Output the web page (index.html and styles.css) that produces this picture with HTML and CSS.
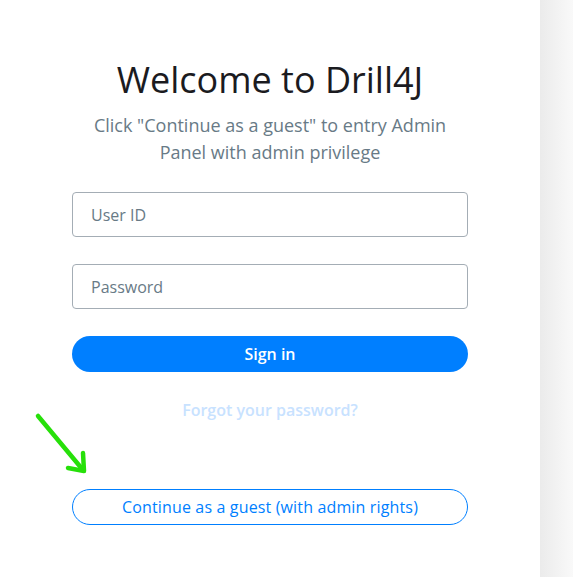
FILE: index.html
```html
<!DOCTYPE html>
<html>
<head>
<meta charset="utf-8">
<link rel="stylesheet" href="styles.css">
</head>
<body>
<div class="page">
  <main class="main">
    <div class="form">
      <h1 class="title">Welcome to Drill4J</h1>
      <p class="subtitle">Click "Continue as a guest" to entry Admin Panel with admin privilege</p>
      <input class="field" type="text" placeholder="User ID">
      <input class="field" type="password" placeholder="Password">
      <button class="btn-primary">Sign in</button>
      <a class="forgot">Forgot your password?</a>
      <button class="btn-guest">Continue as a guest (with admin rights)</button>
    </div>
    <svg class="arrow" width="65" height="75" viewBox="0 0 65 75">
      <path d="M8 11 L53 65" stroke="#27e00a" stroke-width="4.5" stroke-linecap="round" fill="none"/>
      <path d="M53 48 L54 66 L38 63" stroke="#27e00a" stroke-width="4.5" stroke-linecap="round" stroke-linejoin="round" fill="none"/>
    </svg>
  </main>
  <aside class="side"></aside>
</div>
</body>
</html>
```
FILE: styles.css
```css
* { box-sizing: border-box; }
html, body { margin: 0; padding: 0; background: #fff; }
body { font-family: "Open Sans", sans-serif; }
.page { display: flex; height: 577px; }
.main { width: 540px; position: relative; display: flex; justify-content: center; }
.side { flex: 1; background: linear-gradient(to right, #ebebeb, #f9f9f9); }
.form { width: 396px; display: flex; flex-direction: column; align-items: center; padding-top: 56px; }
.title { margin: 0; font-size: 36px; font-weight: 400; line-height: 48px; color: #1b1b1f; }
.subtitle { margin: 8px 0 0; font-size: 18px; line-height: 27px; color: #687a86; text-align: center; width: 396px; }
.field { width: 396px; height: 45px; border: 1px solid #a4adb5; border-radius: 4px; padding: 0 18px; font-family: inherit; font-size: 16px; color: #1b1b1f; outline: none; }
.field::placeholder { color: #687a86; }
.field:first-of-type { margin-top: 26px; }
.field + .field { margin-top: 27px; }
.btn-primary { margin-top: 27px; width: 396px; height: 36px; border: none; border-radius: 18px; background: #007fff; color: #fff; font-family: inherit; font-size: 16px; font-weight: 600; }
.forgot { margin-top: 27px; font-size: 16px; font-weight: 600; color: #c8e2ff; line-height: 22px; }
.btn-guest { margin-top: 68px; width: 396px; height: 36px; border: 1px solid #007fff; border-radius: 18px; background: #fff; color: #007fff; font-family: inherit; font-size: 16px; letter-spacing: 0.15px; }
.arrow { position: absolute; left: 30px; top: 405px; }
```
